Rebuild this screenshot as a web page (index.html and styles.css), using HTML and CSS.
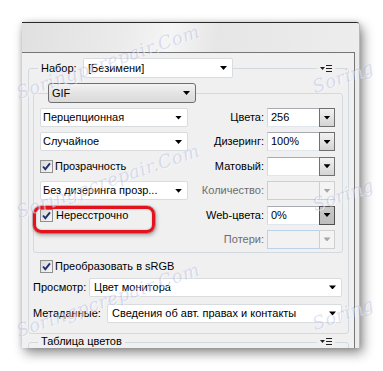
FILE: index.html
```html
<!DOCTYPE html>
<html lang="ru">
<head>
	<meta charset="UTF-8">
	<title>Сохранить для Web — GIF</title>
	<link rel="stylesheet" href="styles.css">
</head>
<body>
	<div class="panel">
		<div class="panel-head"></div>
		<div class="panel-body">
			<!-- preset group -->
			<div class="group group-main">
				<div class="group-head">
					<span class="legend legend-preset">Набор:</span>
					<div class="select select-preset">[Безимени]</div>
					<span class="menu-icon">
						<svg width="12" height="9" viewBox="0 0 12 9"><path d="M0 3h5L2.5 6z" fill="#222"/><rect x="6" y="1" width="6" height="1" fill="#222"/><rect x="6" y="4" width="6" height="1" fill="#222"/><rect x="6" y="7" width="6" height="1" fill="#222"/></svg>
					</span>
				</div>

				<div class="group group-inner">
					<div class="group-head">
						<div class="select select-format">GIF</div>
					</div>
					<div class="settings">
						<div class="select">Перцепционная</div>
						<span class="field-label">Цвета:</span>
						<div class="combo"><span class="combo-value">256</span><span class="combo-btn"></span></div>

						<div class="select">Случайное</div>
						<span class="field-label">Дизеринг:</span>
						<div class="combo"><span class="combo-value">100%</span><span class="combo-btn"></span></div>

						<label class="check"><span class="checkbox"><svg width="11" height="11" viewBox="0 0 11 11"><path d="M2 5.5l2.3 2.7L9 2.3" fill="none" stroke="#23306e" stroke-width="1.9"/></svg></span>Прозрачность</label>
						<span class="field-label">Матовый:</span>
						<div class="combo"><span class="combo-value"></span><span class="combo-btn"></span></div>

						<div class="select">Без дизеринга прозр...</div>
						<span class="field-label is-disabled">Количество:</span>
						<div class="combo is-disabled"><span class="combo-value"></span><span class="combo-btn"></span></div>

						<label class="check highlight"><span class="checkbox"><svg width="11" height="11" viewBox="0 0 11 11"><path d="M2 5.5l2.3 2.7L9 2.3" fill="none" stroke="#23306e" stroke-width="1.9"/></svg></span>Нересстрочно</label>
						<span class="field-label">Web-цвета:</span>
						<div class="combo is-pressed"><span class="combo-value">0%</span><span class="combo-btn"></span></div>

						<span></span>
						<span class="field-label is-disabled">Потери:</span>
						<div class="combo is-disabled"><span class="combo-value"></span><span class="combo-btn"></span></div>
					</div>
				</div>

				<label class="check check-srgb"><span class="checkbox"><svg width="11" height="11" viewBox="0 0 11 11"><path d="M2 5.5l2.3 2.7L9 2.3" fill="none" stroke="#23306e" stroke-width="1.9"/></svg></span>Преобразовать в sRGB</label>

				<div class="row row-view">
					<span class="row-label label-view">Просмотр:</span>
					<div class="select select-wide">Цвет монитора</div>
				</div>
				<div class="row row-meta">
					<span class="row-label label-meta">Метаданные:</span>
					<div class="select select-wide">Сведения об авт. правах и контакты</div>
				</div>
			</div>

			<!-- color table group -->
			<div class="group group-table">
				<div class="group-head">
					<span class="legend">Таблица цветов</span>
					<span class="menu-icon">
						<svg width="12" height="9" viewBox="0 0 12 9"><path d="M0 3h5L2.5 6z" fill="#222"/><rect x="6" y="1" width="6" height="1" fill="#222"/><rect x="6" y="4" width="6" height="1" fill="#222"/><rect x="6" y="7" width="6" height="1" fill="#222"/></svg>
					</span>
				</div>
			</div>
		</div>
	</div>

	<!-- watermark -->
	<div class="watermarks">
		<span class="mark mark-1">Soringpcrepair.Com</span>
		<span class="mark mark-2">Soringpcrepair.Com</span>
		<span class="mark mark-3">Soringpcrepair.Com</span>
		<span class="mark mark-4">Soring</span>
		<span class="mark mark-5">Soring</span>
		<span class="mark mark-6">Soring</span>
	</div>
</body>
</html>
```

FILE: styles.css
```css
*,
*::before,
*::after {
	margin: 0;
	padding: 0;
	box-sizing: border-box;
}

:root {
	--panel-bg: #f0f0f0;
	--group-line: #d3dadf;
	--text: #000;
	--text-disabled: #6d6d6d;
}

body {
	position: relative;
	width: 383px;
	height: 371px;
	overflow: hidden;
	background: #fff;
	color: var(--text);
	font-family: "Liberation Sans", Arial, sans-serif;
	font-size: 11px;
	line-height: 1;
}

/**
* Panel frame
*/
.panel {
	display: flex;
	flex-direction: column;
	width: 338px;
	height: 326px;
	margin: 22px 0 0 22px;
	background: linear-gradient(to right, #f4f4f4, #ececec);
	border-top: 1px solid #2a2a2a;
	border-right: 1px solid #b8b8b8;
	border-top-right-radius: 4px;
	box-shadow: 3px 5px 12px rgba(0, 0, 0, 0.45), 0 0 5px rgba(0, 0, 0, 0.15);
	overflow: hidden;
}

.panel-head {
	flex: none;
	height: 29px;
	background: linear-gradient(100deg, #e0e0e0 0%, #ebebeb 30%, #f5f5f5 44%, #e6e6e6 58%, #ededed 100%);
}

.panel-body {
	flex: 1;
	width: 333px;
	padding-top: 15px;
	background: var(--panel-bg);
	border-top: 1px solid #767676;
	border-right: 1px solid #767676;
	overflow: hidden;
}

/**
* Group boxes
*/
.group {
	border: 1px solid var(--group-line);
	border-radius: 3px;
}

.group-head {
	display: flex;
	align-items: center;
	height: 20px;
	margin-top: -11px;
}

.legend {
	margin-left: 9px;
	padding: 0 3px;
	background: var(--panel-bg);
}

.legend-preset {
	width: 45px;
}

.menu-icon {
	display: flex;
	margin-left: auto;
	margin-right: 13px;
	padding: 0 3px;
	background: var(--panel-bg);
}

.group-main {
	margin: 0 5px 0 6px;
	padding-bottom: 10px;
}

.group-inner {
	margin: 15px 5px 0 4px;
	padding: 0 7px 3px 6px;
}

.group-table {
	height: 40px;
	margin: 8px 5px 0 6px;
}

/**
* Dropdowns
*/
.select {
	display: flex;
	align-items: center;
	height: 19px;
	padding: 0 5px 0 2px;
	background: #fff;
	border: 1px solid #d9dcdf;
	border-radius: 2px;
	white-space: nowrap;
}

.select::after {
	content: "";
	flex: none;
	width: 7px;
	height: 4px;
	margin-left: auto;
	background: #000;
	clip-path: polygon(0 0, 100% 0, 50% 100%);
}

.select-preset {
	width: 150px;
	height: 20px;
	padding-left: 4px;
}

.select-format {
	width: 148px;
	height: 20px;
	margin-left: 8px;
	padding-left: 3px;
	border-color: #6f6f6f;
	border-radius: 3px;
	background: linear-gradient(#f3f3f3, #e4e4e4 50%, #dadada);
}

.select-wide {
	flex: 1;
	padding-left: 4px;
}

/**
* Settings grid
*/
.settings {
	display: grid;
	grid-template-columns: 148px 1fr 68px;
	grid-auto-rows: 19px;
	row-gap: 5.4px;
	column-gap: 3px;
	margin-top: 5px;
	align-items: center;
}

.field-label {
	text-align: right;
}

.is-disabled.field-label {
	color: var(--text-disabled);
}

.combo {
	display: flex;
	height: 19px;
	background: #fff;
	border: 1px solid;
	border-color: #a9abb2 #d6dae0 #e1e6eb #d6dae0;
}

.combo-value {
	flex: 1;
	display: flex;
	align-items: center;
	padding-left: 3px;
}

.combo-btn {
	display: flex;
	align-items: center;
	justify-content: center;
	width: 16px;
	margin: -1px -1px -1px 0;
	border: 1px solid #707070;
	background: linear-gradient(#f2f2f2, #e3e3e3 50%, #d4d4d4);
}

.combo-btn::after {
	content: "";
	width: 7px;
	height: 4px;
	background: #000;
	clip-path: polygon(0 0, 100% 0, 50% 100%);
}

.combo.is-pressed .combo-btn {
	border-color: #505050;
	background: linear-gradient(#c9c9c9, #bdbdbd);
}

.combo.is-disabled {
	background: #f2f2f2;
	border-color: #bcd2ea;
}

.combo.is-disabled .combo-btn {
	border-color: #cfcfcf;
	background: #f4f4f4;
}

.combo.is-disabled .combo-btn::after {
	background: #a6a6a6;
}

/**
* Checkboxes
*/
.check {
	display: flex;
	align-items: center;
	gap: 2px;
	white-space: nowrap;
}

.checkbox {
	display: flex;
	align-items: center;
	justify-content: center;
	flex: none;
	width: 13px;
	height: 13px;
	border: 1px solid #8e8f8f;
	background: linear-gradient(135deg, #d9d9d9, #f6f6f6);
}

.check-srgb {
	height: 13px;
	margin: 7px 0 0 11px;
}

/* red annotation frame */
.highlight {
	position: relative;
	gap: 3px;
}

.highlight::before {
	content: "";
	position: absolute;
	left: -7px;
	top: -3px;
	width: 122px;
	height: 27px;
	border: 3px solid #e2131c;
	border-radius: 8px;
	box-shadow: 1px 2px 4px rgba(0, 0, 0, 0.35), 0 0 0 1px rgba(140, 0, 0, 0.25), inset 0 0 2px rgba(0, 0, 0, 0.3);
}

/**
* Bottom rows
*/
.row {
	display: flex;
	align-items: center;
	height: 19px;
	margin: 0 6px 0 4px;
}

.row-view {
	margin-top: 5px;
}

.row-meta {
	margin-top: 7px;
}

.label-view {
	width: 56px;
}

.label-meta {
	width: 74px;
}

/**
* Watermark
*/
.watermarks {
	position: absolute;
	inset: 0;
	pointer-events: none;
}

.mark {
	position: absolute;
	font-family: "DejaVu Serif", serif;
	font-style: italic;
	font-size: 18px;
	letter-spacing: 0.5px;
	color: rgba(125, 140, 215, 0.25);
	text-shadow: 1px 1px 0 rgba(255, 255, 255, 0.5);
	white-space: nowrap;
	transform: rotate(-19deg);
	transform-origin: 0 100%;
}

.mark-1 { left: 20px; top: 84px; }
.mark-2 { left: 20px; top: 203px; }
.mark-3 { left: 20px; top: 322px; }
.mark-4 { left: 316px; top: 78px; }
.mark-5 { left: 316px; top: 196px; }
.mark-6 { left: 316px; top: 315px; }
```
